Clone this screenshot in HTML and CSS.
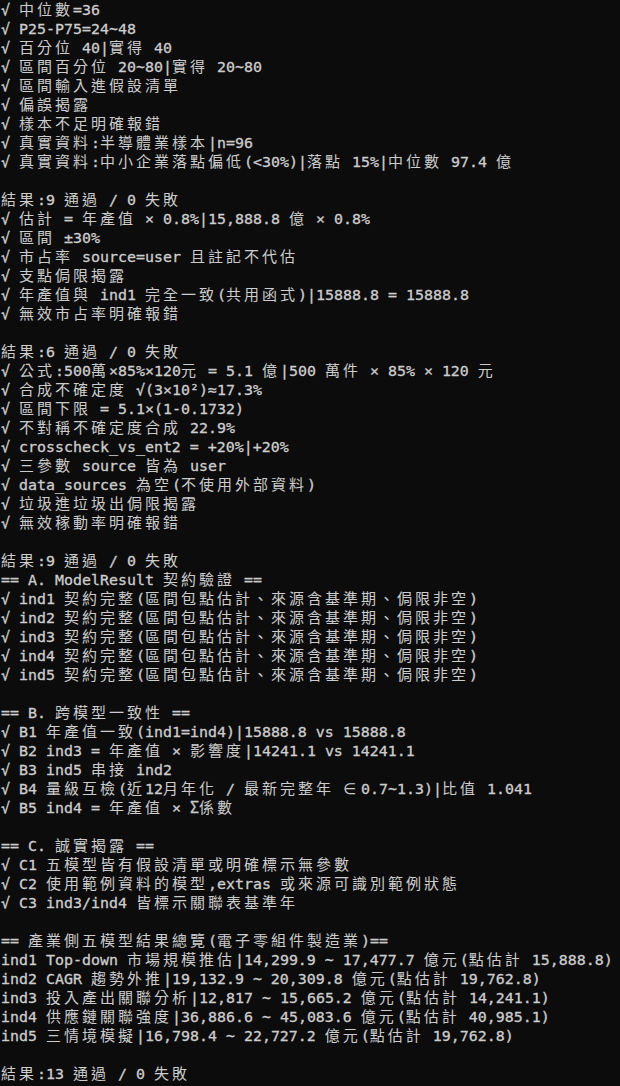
FILE: index.html
```html
<!DOCTYPE html>
<html lang="zh-Hant">
<head>
<meta charset="utf-8">
<title>Terminal output</title>
<link rel="stylesheet" href="styles.css">
</head>
<body>
<pre class="out">√ <span class="w">中位數</span>=36
√ P25-P75=24~48
√ <span class="w">百分位</span> 40|<span class="w">實得</span> 40
√ <span class="w">區間百分位</span> 20~80|<span class="w">實得</span> 20~80
√ <span class="w">區間輸入進假設清單</span>
√ <span class="w">偏誤揭露</span>
√ <span class="w">樣本不足明確報錯</span>
√ <span class="w">真實資料</span>:<span class="w">半導體業樣本</span>|n=96
√ <span class="w">真實資料</span>:<span class="w">中小企業落點偏低</span>(&lt;30%)|<span class="w">落點</span> 15%|<span class="w">中位數</span> 97.4 <span class="w">億</span>

<span class="w">結果</span>:9 <span class="w">通過</span> / 0 <span class="w">失敗</span>
√ <span class="w">估計</span> = <span class="w">年產值</span> × 0.8%|15,888.8 <span class="w">億</span> × 0.8%
√ <span class="w">區間</span> ±30%
√ <span class="w">市占率</span> source=user <span class="w">且註記不代估</span>
√ <span class="w">支點侷限揭露</span>
√ <span class="w">年產值與</span> ind1 <span class="w">完全一致</span>(<span class="w">共用函式</span>)|15888.8 = 15888.8
√ <span class="w">無效市占率明確報錯</span>

<span class="w">結果</span>:6 <span class="w">通過</span> / 0 <span class="w">失敗</span>
√ <span class="w">公式</span>:500<span class="w">萬</span>×85%×120<span class="w">元</span> = 5.1 <span class="w">億</span>|500 <span class="w">萬件</span> × 85% × 120 <span class="w">元</span>
√ <span class="w">合成不確定度</span> √(3×10²)≈17.3%
√ <span class="w">區間下限</span> = 5.1×(1-0.1732)
√ <span class="w">不對稱不確定度合成</span> 22.9%
√ crosscheck_vs_ent2 = +20%|+20%
√ <span class="w">三參數</span> source <span class="w">皆為</span> user
√ data_sources <span class="w">為空</span>(<span class="w">不使用外部資料</span>)
√ <span class="w">垃圾進垃圾出侷限揭露</span>
√ <span class="w">無效稼動率明確報錯</span>

<span class="w">結果</span>:9 <span class="w">通過</span> / 0 <span class="w">失敗</span>
== A. ModelResult <span class="w">契約驗證</span> ==
√ ind1 <span class="w">契約完整</span>(<span class="w">區間包點估計、來源含基準期、侷限非空</span>)
√ ind2 <span class="w">契約完整</span>(<span class="w">區間包點估計、來源含基準期、侷限非空</span>)
√ ind3 <span class="w">契約完整</span>(<span class="w">區間包點估計、來源含基準期、侷限非空</span>)
√ ind4 <span class="w">契約完整</span>(<span class="w">區間包點估計、來源含基準期、侷限非空</span>)
√ ind5 <span class="w">契約完整</span>(<span class="w">區間包點估計、來源含基準期、侷限非空</span>)

== B. <span class="w">跨模型一致性</span> ==
√ B1 <span class="w">年產值一致</span>(ind1=ind4)|15888.8 vs 15888.8
√ B2 ind3 = <span class="w">年產值</span> × <span class="w">影響度</span>|14241.1 vs 14241.1
√ B3 ind5 <span class="w">串接</span> ind2
√ B4 <span class="w">量級互檢</span>(<span class="w">近</span>12<span class="w">月年化</span> / <span class="w">最新完整年</span> <span class="wc">∈</span>0.7~1.3)|<span class="w">比值</span> 1.041
√ B5 ind4 = <span class="w">年產值</span> × Σ<span class="w">係數</span>

== C. <span class="w">誠實揭露</span> ==
√ C1 <span class="w">五模型皆有假設清單或明確標示無參數</span>
√ C2 <span class="w">使用範例資料的模型</span>,extras <span class="w">或來源可識別範例狀態</span>
√ C3 ind3/ind4 <span class="w">皆標示關聯表基準年</span>

== <span class="w">產業側五模型結果總覽</span>(<span class="w">電子零組件製造業</span>)==
ind1 Top-down <span class="w">市場規模推估</span>|14,299.9 ~ 17,477.7 <span class="w">億元</span>(<span class="w">點估計</span> 15,888.8)
ind2 CAGR <span class="w">趨勢外推</span>|19,132.9 ~ 20,309.8 <span class="w">億元</span>(<span class="w">點估計</span> 19,762.8)
ind3 <span class="w">投入產出關聯分析</span>|12,817 ~ 15,665.2 <span class="w">億元</span>(<span class="w">點估計</span> 14,241.1)
ind4 <span class="w">供應鏈關聯強度</span>|36,886.6 ~ 45,083.6 <span class="w">億元</span>(<span class="w">點估計</span> 40,985.1)
ind5 <span class="w">三情境模擬</span>|16,798.4 ~ 22,727.2 <span class="w">億元</span>(<span class="w">點估計</span> 19,762.8)

<span class="w">結果</span>:13 <span class="w">通過</span> / 0 <span class="w">失敗</span></pre>
</body>
</html>
```

FILE: styles.css
```css
html, body {
  margin: 0;
  padding: 0;
  background: #0c0c0c;
}

.out {
  margin: 0;
  padding: 1px 0 0 1px;
  height: 1086px;
  box-sizing: border-box;
  overflow: hidden;
  background: #0c0c0c;
  color: #cccccc;
  font-family: "DejaVu Sans Mono", "Noto Sans CJK TC", monospace;
  font-size: 14.95px;
  line-height: 19px;
  white-space: pre;
  -webkit-text-stroke: 0.3px #cccccc;
}

.w {
  font-family: "Noto Sans CJK TC", "Noto Sans CJK SC", sans-serif;
  font-size: 15px;
  line-height: 0;
  letter-spacing: 3px;
  -webkit-text-stroke: 0;
}

.wc {
  display: inline-block;
  width: 18px;
  line-height: 0;
  font-family: "DejaVu Sans", sans-serif;
  -webkit-text-stroke: 0;
}
```
